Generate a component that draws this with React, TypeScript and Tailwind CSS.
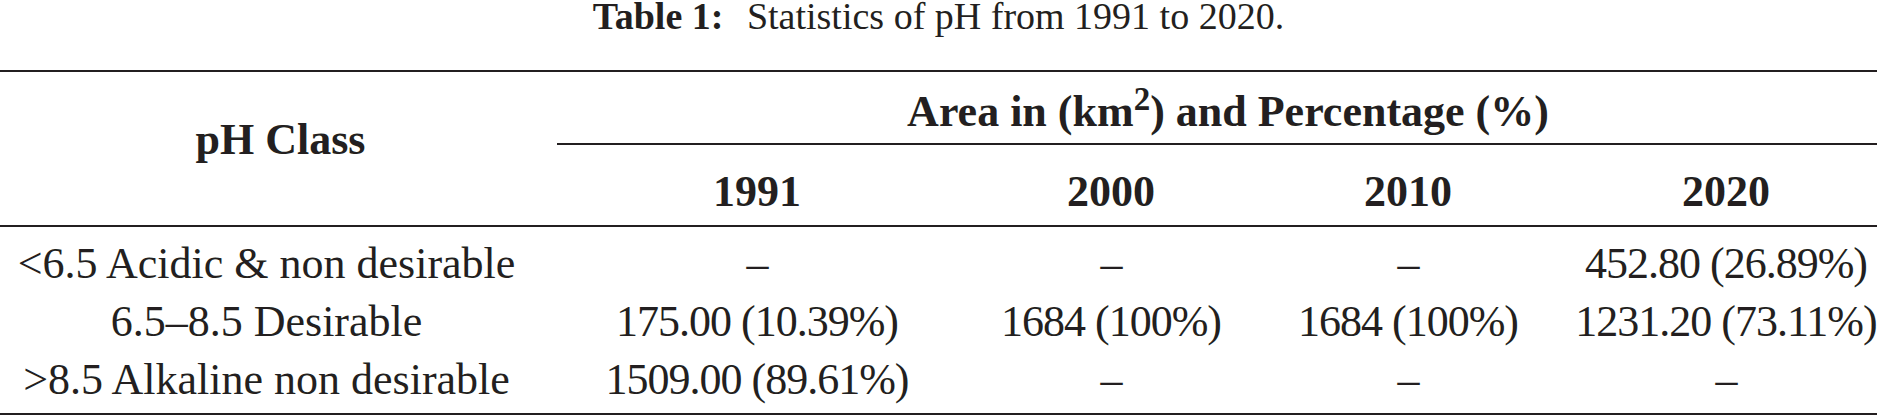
import React from "react";

const rows = [
  ["<6.5 Acidic & non desirable", "–", "–", "–", "452.80 (26.89%)"],
  ["6.5–8.5 Desirable", "175.00 (10.39%)", "1684 (100%)", "1684 (100%)", "1231.20 (73.11%)"],
  [">8.5 Alkaline non desirable", "1509.00 (89.61%)", "–", "–", "–"],
];

export default function App() {
  return (
    <div
      className="w-[1877px] h-[417px] bg-white text-[#231f20]"
      style={{ fontFamily: '"Liberation Serif", "Times New Roman", serif' }}
    >
      <div className="h-[32px] leading-[32px] text-[38px] text-center whitespace-nowrap">
        <span className="font-bold mr-[14px]">Table 1:</span>
        <span> Statistics of pH from 1991 to 2020.</span>
      </div>
      <div className="mt-[38px] h-[2px] bg-[#231f20]" />
      <div className="grid grid-cols-[533px_448px_260px_334px_302px] text-[44px] font-bold">
        <div className="row-span-3 pt-[39px] leading-[58px] text-center pl-[28px]">pH Class</div>
        <div className="col-span-4 pt-[11px] pb-[2px] leading-[58px] text-center pl-[46px]">
          Area in (km<sup>2</sup>) and Percentage (%)
        </div>
        <div className="col-span-4 ml-[24px] h-[2px] bg-[#231f20]" />
        <div className="pt-[18px] pb-[4px] leading-[58px] text-center">1991</div>
        <div className="pt-[18px] pb-[4px] leading-[58px] text-center">2000</div>
        <div className="pt-[18px] pb-[4px] leading-[58px] text-center">2010</div>
        <div className="pt-[18px] pb-[4px] leading-[58px] text-center">2020</div>
      </div>
      <div className="h-[2px] bg-[#231f20]" />
      <div className="grid grid-cols-[533px_448px_260px_334px_302px] text-[44px] leading-[58px] pt-[8px] pb-[4px]">
        {rows.map((r, i) =>
          r.map((c, j) => (
            <div
              key={i + "-" + j}
              className={
                j === 0
                  ? "text-center whitespace-nowrap"
                  : "text-center whitespace-nowrap tracking-[-1px]"
              }
            >
              {c}
            </div>
          ))
        )}
      </div>
      <div className="h-[2px] bg-[#231f20]" />
    </div>
  );
}
